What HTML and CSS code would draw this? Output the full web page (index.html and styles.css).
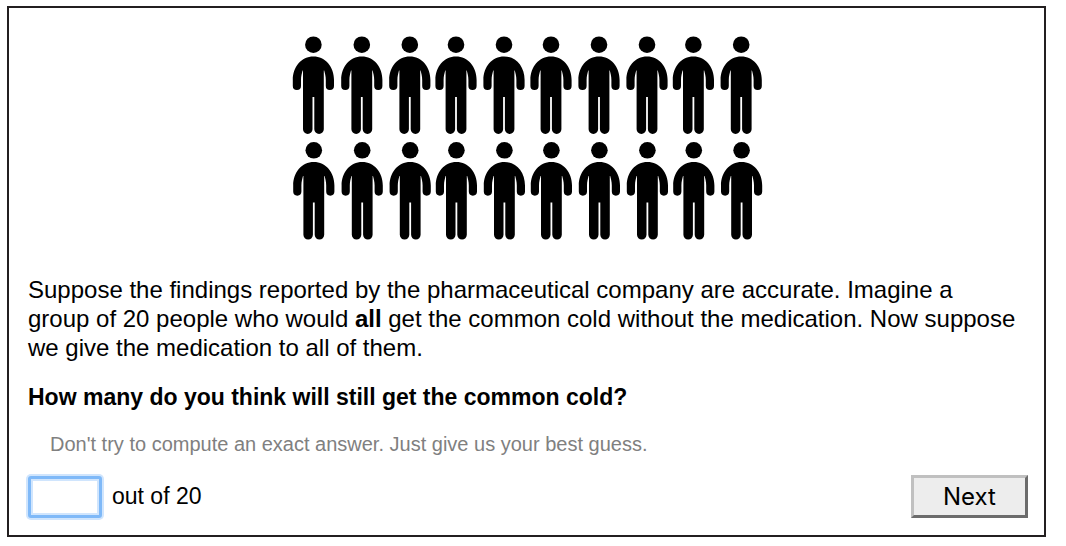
FILE: index.html
```html
<!DOCTYPE html>
<html lang="en">
<head>
<meta charset="utf-8">
<title>Medication question</title>
<link rel="stylesheet" href="styles.css">
</head>
<body>
<form class="card">
  <svg class="people" viewBox="0 0 474 208" role="img" aria-label="20 people">
    <defs>
      <g id="person">
        <circle cx="0" cy="9.7" r="8.3"/>
        <path d="M0 21.4C-12 21.4-20.6 31.5-20.6 45V51A4 4 0 0 0-12.4 51V45C-12.4 41-11.4 38-10.8 35.5H-10.4V94.2A4.6 4.6 0 0 0-.9 94.2V62H.9V94.2A4.6 4.6 0 0 0 10.4 94.2V35.5H10.8C11.4 38 12.4 41 12.4 45V51A4 4 0 0 0 20.6 51V45C20.6 31.5 12 21.4 0 21.4Z"/>
      </g>
      <g id="row">
        <use href="#person" x="22.4"/>
        <use href="#person" x="70.8"/>
        <use href="#person" x="118.8"/>
        <use href="#person" x="165"/>
        <use href="#person" x="213"/>
        <use href="#person" x="260"/>
        <use href="#person" x="308"/>
        <use href="#person" x="356"/>
        <use href="#person" x="402.4"/>
        <use href="#person" x="450.2"/>
      </g>
    </defs>
    <use href="#row"/>
    <use href="#row" x=".4" y="105.6"/>
  </svg>
  <p class="text">Suppose the findings reported by the pharmaceutical company are accurate. Imagine a<br>group of 20 people who would <b>all</b> get the common cold without the medication. Now suppose we give the medication to all of them.</p>
  <p class="text question">How many do you think will still get the common cold?</p>
  <p class="hint">Don't try to compute an exact answer. Just give us your best guess.</p>
  <div class="answer">
    <input class="count" id="count" type="text" inputmode="numeric">
    <label class="unit" for="count">out of 20</label>
    <button class="next" type="button">Next</button>
  </div>
</form>
</body>
</html>
```
FILE: styles.css
```css
body {
  margin: 6px 20px 8px 7px;
  background: #fff;
  color: #000;
  font-family: "Liberation Sans", Arial, sans-serif;
}
.card {
  padding: 27px 16px 17px 19px;
  border: 2px solid #231f20;
}
.people {
  display: block;
  width: 474px;
  max-width: 100%;
  margin: 0 auto 32px 263px;
}
.text {
  margin: 0 0 21px;
  font-size: 24px;
  line-height: 29px;
}
.question {
  margin-bottom: 20px;
  font-size: 23px;
  font-weight: bold;
}
.hint {
  margin: 0 22px 19px;
  color: #808080;
  font-size: 20px;
  line-height: 24px;
}
.answer {
  display: flex;
  align-items: center;
}
.count {
  box-sizing: border-box;
  width: 74px;
  height: 42px;
  padding: 4px;
  border: 3px solid #7fb9f8;
  border-radius: 3px;
  outline: none;
  box-shadow: 0 0 0 2px #d0e5fd, inset 0 0 0 2px #d0e5fd;
  font: inherit;
  font-size: 23px;
}
.unit {
  margin-left: 10px;
  font-size: 23px;
}
.next {
  box-sizing: border-box;
  width: 117px;
  height: 43px;
  margin-left: auto;
  padding: 0;
  border: 3px solid;
  border-color: #c0c0c0 #6c6c6c #6c6c6c #c0c0c0;
  background: #ededed;
  color: #000;
  font-family: Inter, sans-serif;
  font-size: 24px;
}
```
